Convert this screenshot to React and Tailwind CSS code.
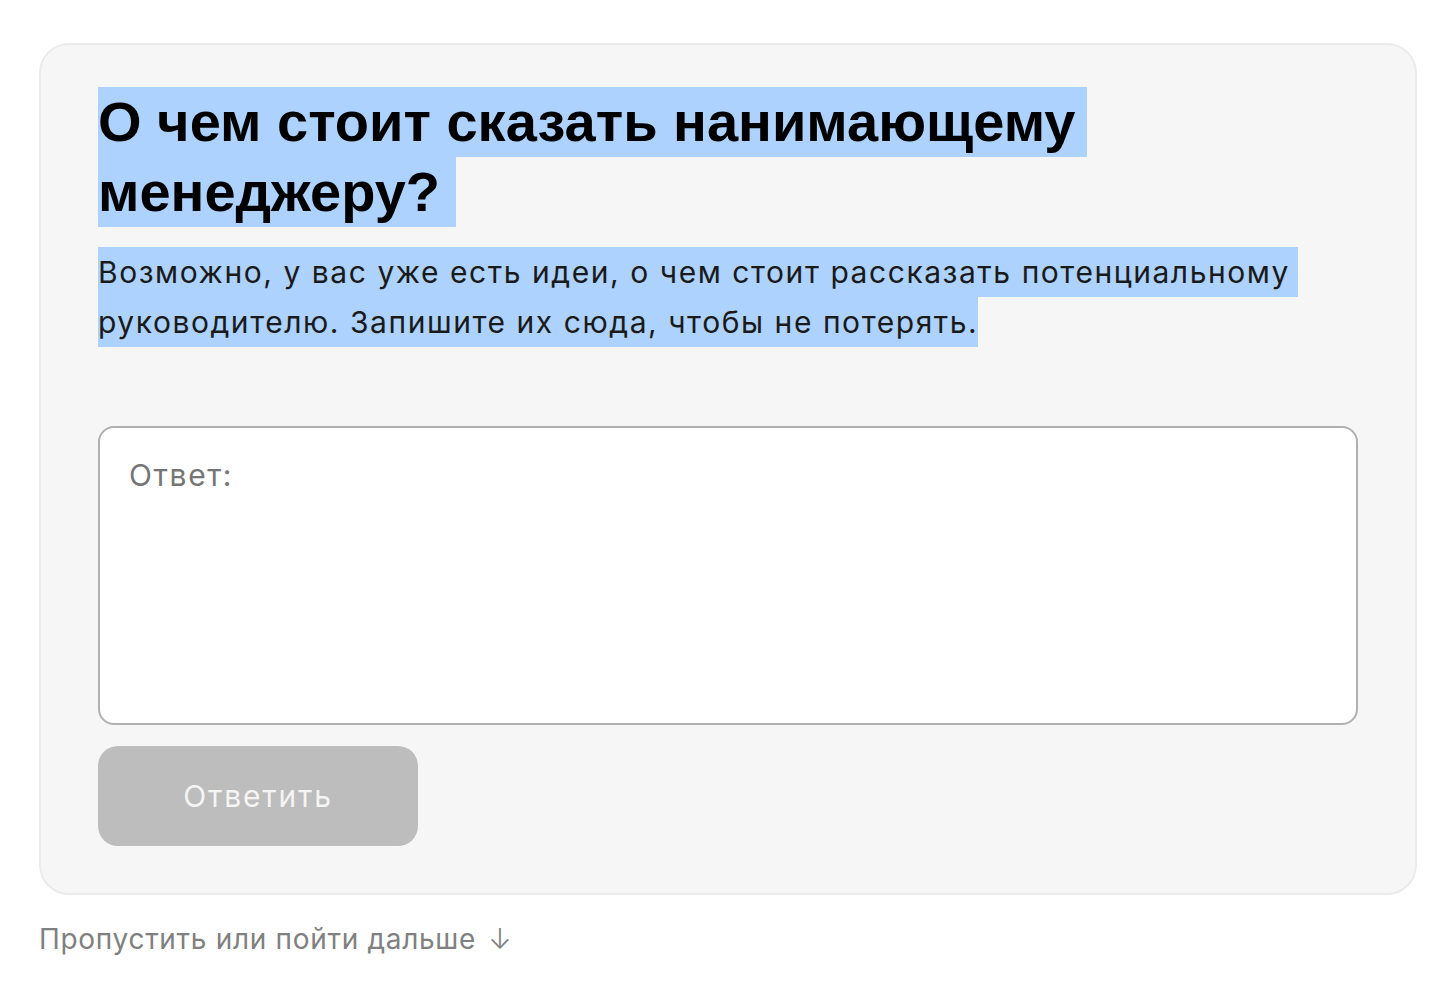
export default function App() {
  return (
    <div className="min-h-screen bg-white pt-[43px] pl-[39px] font-['Inter',sans-serif]">
      <div className="w-[1378px] rounded-[30px] border-2 border-[#ebebeb] bg-[#f6f6f6] px-[57px] pt-[42px] pb-[47px]">
        <h2 className="font-['Liberation_Sans',sans-serif] text-[56px] font-bold leading-[70px] text-black">
          <span className="block w-fit bg-[#acd2fd] pr-3">О чем стоит сказать нанимающему</span>
          <span className="block w-fit bg-[#acd2fd] pr-4">менеджеру?</span>
        </h2>
        <p className="mt-5 text-[30px] leading-[50px] tracking-[1.55px] text-[#1a1a1a]">
          <span className="block w-fit bg-[#acd2fd] pr-2">Возможно, у вас уже есть идеи, о чем стоит рассказать потенциальному</span>
          <span className="block w-fit bg-[#acd2fd]">руководителю. Запишите их сюда, чтобы не потерять.</span>
        </p>
        <textarea
          placeholder="Ответ:"
          className="mt-[79px] block h-[299px] w-full resize-none rounded-2xl border-2 border-[#b0b0b0] bg-white px-[29px] py-[27px] text-[30px] leading-[40px] tracking-[1.6px] text-black placeholder:text-[#757575] focus:outline-none"
        />
        <button
          type="button"
          className="mt-[21px] h-[100px] w-[320px] rounded-[20px] bg-[#bdbdbd] text-[30px] tracking-[1.8px] text-[#f4f4f4]"
        >
          Ответить
        </button>
      </div>
      <div className="mt-[23px] flex items-center gap-3 text-[28px] tracking-[0.7px] text-[#808080]">
        <span>Пропустить или пойти дальше</span>
        <span className="text-[28px] font-light">↓</span>
      </div>
    </div>
  )
}
